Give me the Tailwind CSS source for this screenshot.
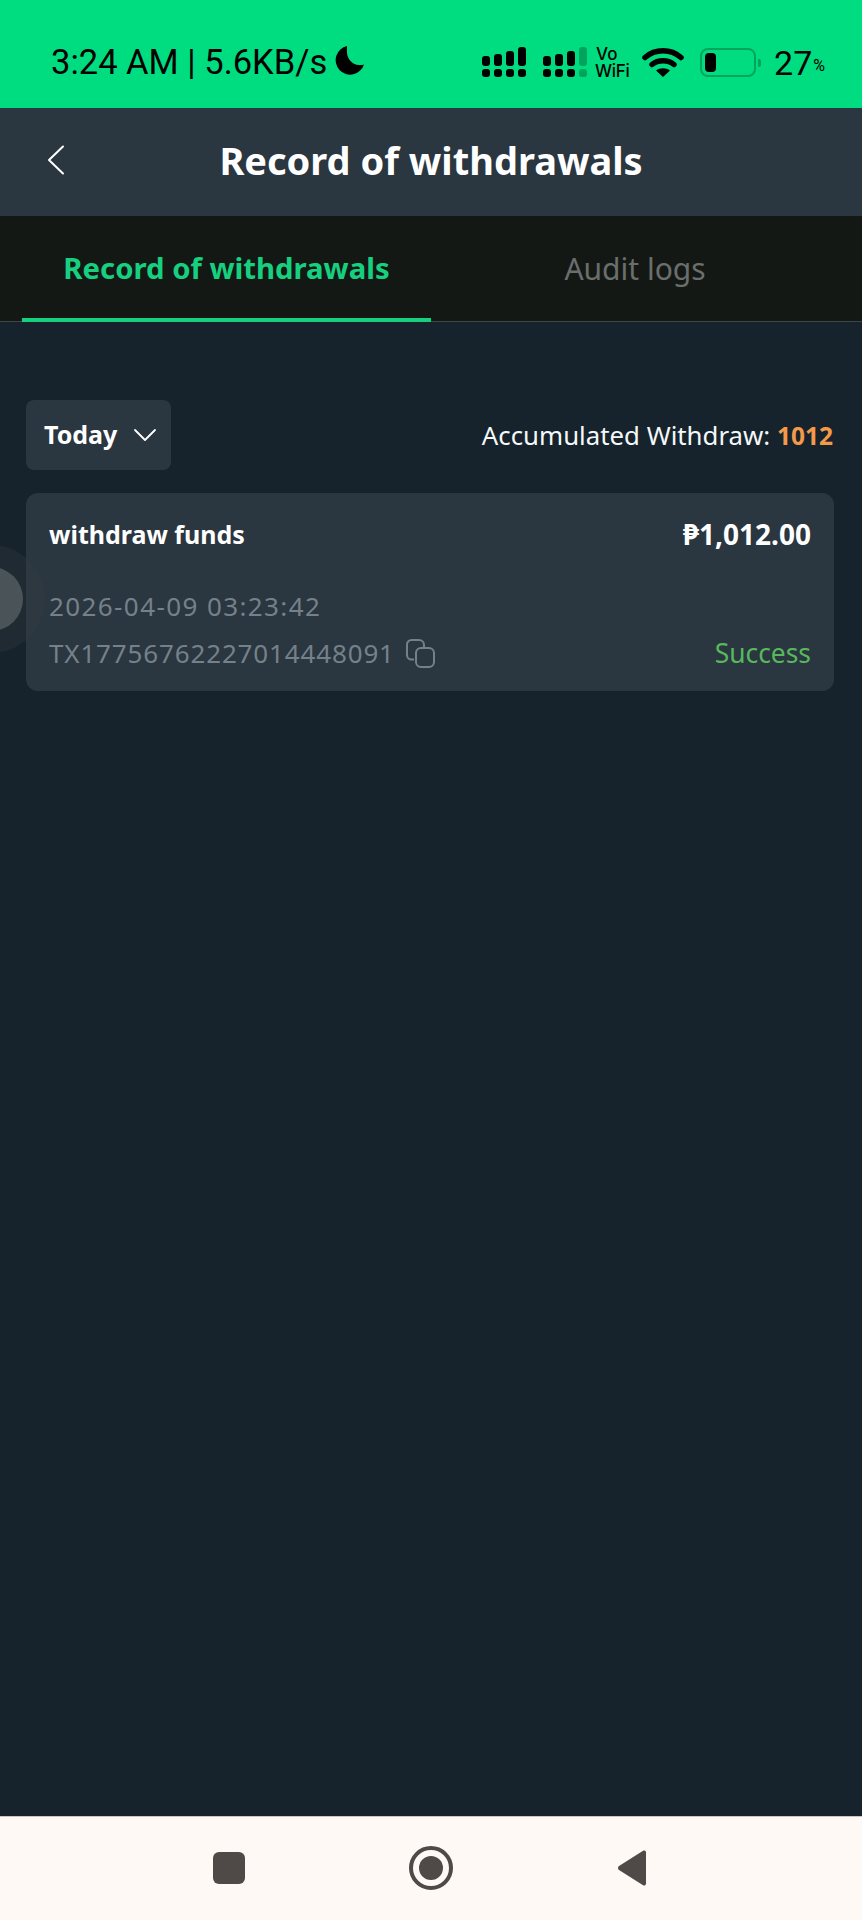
<!DOCTYPE html>
<html lang="en">
<head>
    <meta charset="UTF-8">
    <meta name="viewport" content="width=device-width, initial-scale=1.0">
    <title>Record of withdrawals</title>
    <script src="https://cdn.jsdelivr.net/npm/@tailwindcss/browser@4"></script>
</head>
<body class="bg-[#17232c] font-['Noto_Sans',sans-serif]">
    <div class="relative flex h-[1920px] w-[862px] flex-col overflow-hidden">
        <!-- Status bar -->
        <div class="flex h-[108px] shrink-0 items-center justify-between bg-[#00dd80] pl-[51px] pr-[37px] pt-[17px] font-['Roboto',sans-serif] text-black">
            <div class="flex items-center">
                <span class="text-[34.500px] leading-none">3:24 AM | 5.6KB/s</span>
                <svg class="ml-[8px] -mt-[6px]" width="30" height="30" viewBox="0 0 30 30"><path d="M12 1a14.500 14.500 0 1 0 17 18.500c-1.600.5-3.300.7-5 .6C17.500 19.900 12.500 14 12 8c-.1-2.500 0-4.800 0-7z" fill="#000"/></svg>
            </div>
            <div class="flex items-center">
                <svg width="44" height="31" viewBox="0 0 44 31" fill="#000">
                    <rect x="0" y="9" width="8" height="10" rx="3"/><rect x="12" y="7" width="8" height="12" rx="3"/><rect x="24" y="4" width="8" height="15" rx="3"/><rect x="36" y="0" width="8" height="19" rx="3"/>
                    <rect x="0" y="22" width="8" height="8" rx="3"/><rect x="12" y="22" width="8" height="8" rx="3"/><rect x="24" y="22" width="8" height="8" rx="3"/><rect x="36" y="22" width="8" height="8" rx="3"/>
                </svg>
                <svg class="ml-[17px]" width="44" height="31" viewBox="0 0 44 31" fill="#000">
                    <rect x="0" y="9" width="8" height="10" rx="3"/><rect x="12" y="7" width="8" height="12" rx="3"/><rect x="24" y="4" width="8" height="15" rx="3"/><rect x="36" y="0" width="8" height="19" rx="3" fill="#00a45c"/>
                    <rect x="0" y="22" width="8" height="8" rx="3"/><rect x="12" y="22" width="8" height="8" rx="3"/><rect x="24" y="22" width="8" height="8" rx="3"/><rect x="36" y="22" width="8" height="8" rx="3" fill="#00a45c"/>
                </svg>
                <div class="ml-[8px] flex w-[34px] flex-col font-['Inter',sans-serif] text-[17px] font-medium leading-[17px]">
                    <span class="pl-[1px]">Vo</span>
                    <span class="tracking-[-0.300px]">WiFi</span>
                </div>
                <svg class="ml-[13px] -mt-[2px]" width="42" height="32" viewBox="0 0 42 32">
                    <path d="M3 11.500C13 2.500 29 2.500 39 11.500" fill="none" stroke="#000" stroke-width="5.500" stroke-linecap="round"/>
                    <path d="M10 18.500C16 13.500 26 13.500 32 18.500" fill="none" stroke="#000" stroke-width="5.500" stroke-linecap="round"/>
                    <path d="M21 31l-7-6.500c4-3 10-3 14 0z" fill="#000"/>
                </svg>
                <div class="ml-[16px] flex items-center">
                    <div class="flex h-[29px] w-[56px] items-center rounded-[8px] border-[2px] border-[#00a45c] pl-[3px]">
                        <div class="h-[19px] w-[11px] rounded-[4px] bg-black"></div>
                    </div>
                    <div class="ml-[2px] h-[8px] w-[3px] rounded-r-[2px] bg-[#00a45c]"></div>
                </div>
                <span class="ml-[13px] text-[34px] leading-none">27</span>
                <span class="ml-[1px] mt-[6px] text-[16px] leading-none">%</span>
            </div>
        </div>

        <!-- Title bar -->
        <div class="relative flex h-[108px] shrink-0 items-center justify-center bg-[#2a3640] pb-[4px]">
            <svg class="absolute left-[47px] top-[37px]" width="18" height="30" viewBox="0 0 18 30" fill="none" stroke="#fff" stroke-width="2" stroke-linecap="round" stroke-linejoin="round"><path d="M16 1.500L2 15l14 13.500"/></svg>
            <h1 class="text-[38px] font-bold leading-none text-white">Record of withdrawals</h1>
        </div>

        <!-- Tabs -->
        <div class="flex h-[106px] shrink-0 border-b border-[#3d4747] bg-[#141815]">
            <div class="ml-[22px] flex h-[106px] w-[409px] items-center justify-center border-b-[4px] border-[#16d07f] pt-[3px] text-[29.300px] font-bold text-[#16d07f]">Record of withdrawals</div>
            <div class="flex flex-1 items-center justify-center pr-[23px] text-[30px] text-[#6a6e6c]">Audit logs</div>
        </div>

        <!-- Filter row -->
        <div class="mt-[78px] flex items-center justify-between pl-[26px] pr-[29px]">
            <div class="flex h-[70px] w-[145px] items-center rounded-[8px] bg-[#2a3640] pl-[18px] text-[25px] font-bold text-white">
                Today
                <svg class="ml-[16px]" width="24" height="14" viewBox="0 0 24 14" fill="none" stroke="#fff" stroke-width="1.800" stroke-linecap="round" stroke-linejoin="round"><path d="M2 2l10 10L22 2"/></svg>
            </div>
            <div class="text-[25.800px] text-[#f4f8f9]">Accumulated Withdraw: <span class="text-[24.500px] font-bold text-[#f29a4a]">1012</span></div>
        </div>

        <!-- Record card -->
        <div class="ml-[26px] mr-[28px] mt-[23px] h-[198px] rounded-[12px] bg-[#2a3640] pl-[23px] pr-[23px] pt-[23px]">
            <div class="flex items-center justify-between font-bold leading-[36px] text-white">
                <span class="text-[25px]">withdraw funds</span>
                <span class="text-[28px]">₱1,012.00</span>
            </div>
            <div class="mt-[36px] text-[26px] leading-[36px] tracking-[1.400px] text-[#75818a]">2026-04-09 03:23:42</div>
            <div class="mt-[11px] flex items-center justify-between text-[26px] leading-[36px] text-[#75818a]">
                <div class="flex items-center">
                    <span class="tracking-[0.850px]">TX17756762227014448091</span>
                    <svg class="ml-[10px]" width="31" height="31" viewBox="0 0 31 31" fill="none" stroke="#75818a" stroke-width="2"><path d="M9 21.500H6.500A4.500 4.500 0 0 1 2 17V6.500A4.500 4.500 0 0 1 6.500 2H14a5 5 0 0 1 5 5v2"/><rect x="11" y="10" width="18" height="19" rx="5"/></svg>
                </div>
                <span class="text-[26.400px] text-[#58b85c]">Success</span>
            </div>
        </div>

        <!-- Floating button stuck to the left edge -->
        <div class="absolute -left-[63px] top-[545px] flex h-[108px] w-[108px] items-center justify-center rounded-full bg-[#3a3f42]/25">
            <div class="h-[64px] w-[64px] rounded-full bg-[#4a5458]"></div>
        </div>

        <!-- Navigation bar -->
        <div class="mt-auto flex h-[104px] shrink-0 items-center border-t border-[#c9c7c4] bg-[#fef9f5] pb-[2px]">
            <div class="ml-[213px] h-[32px] w-[32px] rounded-[6px] bg-[#4f4a47]"></div>
            <div class="ml-[164px] flex h-[44px] w-[44px] items-center justify-center rounded-full border-[4px] border-[#4f4a47]">
                <div class="h-[24px] w-[24px] rounded-full bg-[#4f4a47]"></div>
            </div>
            <svg class="ml-[164px]" width="30" height="38" viewBox="0 0 30 38"><path d="M26.500 1.500a2 2 0 0 1 2.500 2v31a2 2 0 0 1-2.500 2L2 21a2.500 2.500 0 0 1 0-4z" fill="#4f4a47"/></svg>
        </div>
    </div>
</body>
</html>
